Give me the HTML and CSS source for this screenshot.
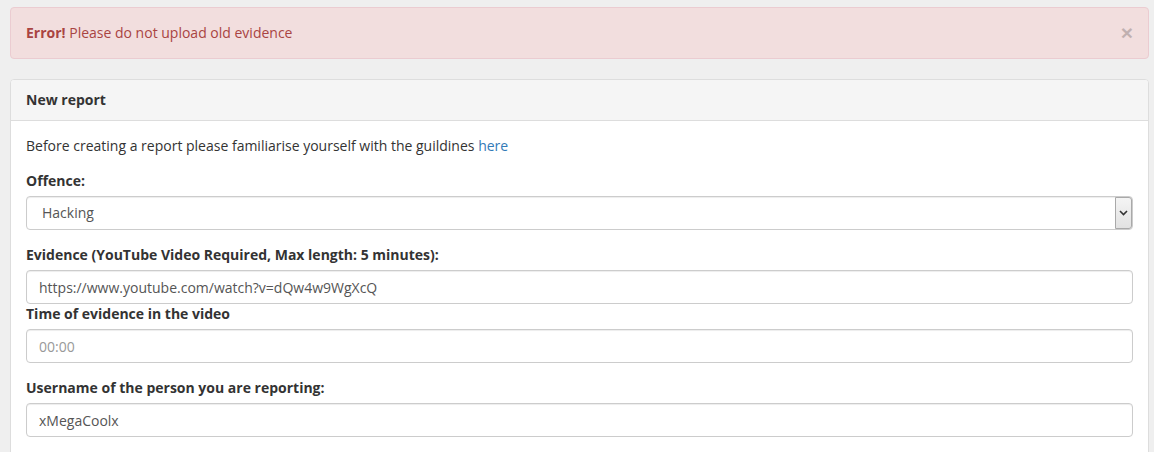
FILE: index.html
```html
<!DOCTYPE html>
<html lang="en">
<head>
    <meta charset="UTF-8">
    <title>New report</title>
    <link rel="stylesheet" href="styles.css">
</head>
<body>
    <div class="container">
        <div class="alert">
            <span><strong>Error!</strong> Please do not upload old evidence</span>
            <button class="close" type="button">&times;</button>
        </div>

        <div class="panel">
            <div class="panel-heading">New report</div>
            <div class="panel-body">
                <p class="intro">Before creating a report please familiarise yourself with the guildines <a href="#">here</a></p>

                <div class="form-group">
                    <label for="offence">Offence:</label>
                    <div class="select-wrap">
                        <select id="offence" class="form-control">
                            <option>Hacking</option>
                            <option>Spamming</option>
                            <option>Griefing</option>
                        </select>
                        <span class="select-arrow">
                            <svg width="9" height="6" viewBox="0 0 9 6"><path d="M1 1 L4.5 4.5 L8 1" fill="none" stroke="#333" stroke-width="1.6"/></svg>
                        </span>
                    </div>
                </div>

                <div class="form-group tight">
                    <label for="evidence">Evidence (YouTube Video Required, Max length: 5 minutes):</label>
                    <input id="evidence" class="form-control" type="text" value="https://www.youtube.com/watch?v=dQw4w9WgXcQ">
                </div>

                <div class="form-group">
                    <label for="time">Time of evidence in the video</label>
                    <input id="time" class="form-control" type="text" placeholder="00:00">
                </div>

                <div class="form-group">
                    <label for="username">Username of the person you are reporting:</label>
                    <input id="username" class="form-control" type="text" value="xMegaCoolx">
                </div>
            </div>
        </div>
    </div>
</body>
</html>
```

FILE: styles.css
```css
* {
    box-sizing: border-box;
}
body {
    margin: 0;
    background: #efefef;
    font-family: "Open Sans", "Liberation Sans", sans-serif;
    font-size: 14px;
    line-height: 20px;
    color: #333;
}
.container {
    padding: 7px 5px 0 10px;
}
.alert {
    display: flex;
    justify-content: space-between;
    align-items: center;
    padding: 15px;
    margin-bottom: 20px;
    background: #f2dede;
    border: 1px solid #ebccd1;
    border-radius: 4px;
    color: #a94442;
}
.alert strong {
    font-weight: 700;
}
.close {
    background: none;
    border: 0;
    padding: 0;
    font-family: "Liberation Sans", sans-serif;
    font-size: 21px;
    font-weight: 700;
    line-height: 20px;
    color: #000;
    opacity: 0.2;
    cursor: pointer;
}
.panel {
    background: #fff;
    border: 1px solid #ddd;
    border-radius: 4px;
}
.panel-heading {
    padding: 10px 15px;
    background: #f5f5f5;
    border-bottom: 1px solid #ddd;
    border-radius: 3px 3px 0 0;
    font-weight: 700;
    color: #333;
}
.panel-body {
    padding: 15px;
}
.intro {
    margin: 0 0 15px;
}
.intro a {
    color: #337ab7;
    text-decoration: none;
}
.form-group {
    margin-bottom: 15px;
}
.form-group.tight {
    margin-bottom: 0;
}
label {
    display: block;
    margin-bottom: 5px;
    font-weight: 700;
}
.form-control {
    display: block;
    width: 100%;
    height: 34px;
    padding: 6px 12px;
    font-family: inherit;
    font-size: 14px;
    line-height: 20px;
    color: #555;
    background: #fff;
    border: 1px solid #ccc;
    border-radius: 4px;
    box-shadow: inset 0 1px 1px rgba(0, 0, 0, 0.075);
}
.form-control::placeholder {
    color: #999;
}
.select-wrap {
    position: relative;
}
select.form-control {
    appearance: none;
    -webkit-appearance: none;
    padding-left: 15px;
}
.select-arrow {
    position: absolute;
    top: 1px;
    right: 1px;
    bottom: 1px;
    width: 17px;
    display: flex;
    align-items: center;
    justify-content: center;
    background: linear-gradient(#f4f4f4, #e2e2e2);
    border: 1px solid #a9a9a9;
    border-radius: 0 3px 3px 0;
    pointer-events: none;
}
```
